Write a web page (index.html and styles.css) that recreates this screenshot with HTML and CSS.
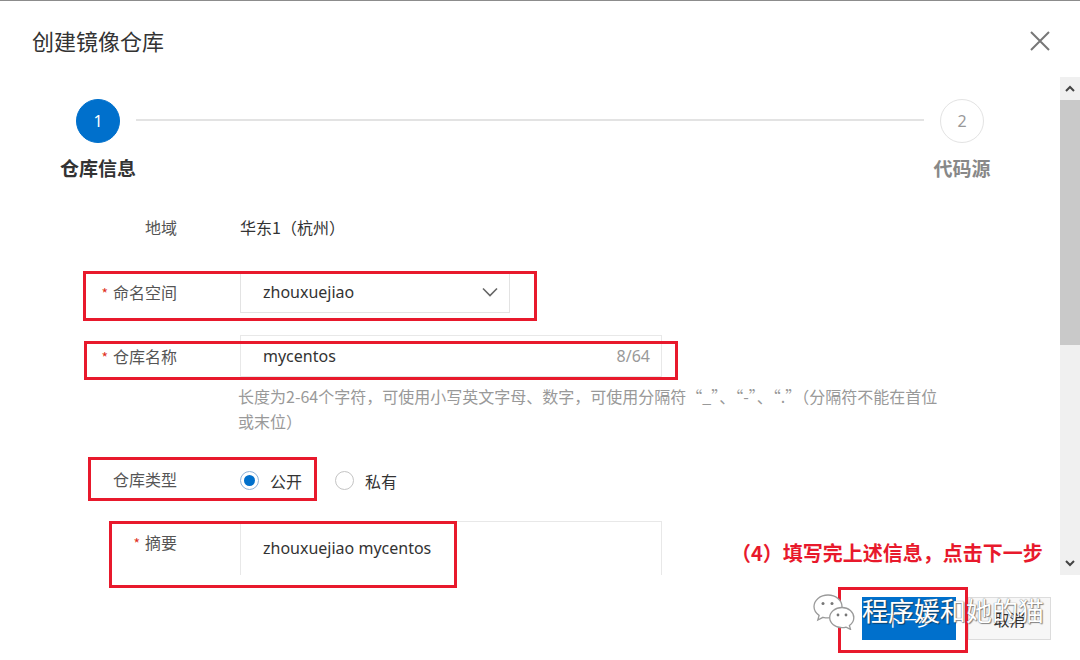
FILE: index.html
```html
<!DOCTYPE html>
<html lang="zh-CN">
<head>
<meta charset="utf-8">
<title>创建镜像仓库</title>
<link rel="stylesheet" href="styles.css">
</head>
<body>
<div class="page">
  <div class="dialog">
    <div class="header">
      <div class="title">创建镜像仓库</div>
      <svg class="close" width="20" height="20" viewBox="0 0 20 20"><path d="M1 1L19 19M19 1L1 19" stroke="#777" stroke-width="2" fill="none"/></svg>
    </div>
    <div class="main">
      <div class="content">
        <div class="steps">
          <div class="circle active">1</div>
          <div class="line"></div>
          <div class="circle">2</div>
          <div class="step-label active">仓库信息</div>
          <div></div>
          <div class="step-label">代码源</div>
        </div>
        <div class="form">
          <div class="row row-region">
            <div class="label">地域</div>
            <div class="value">华东1（杭州）</div>
          </div>
          <div class="row row-ns">
            <div class="label"><span class="req">*</span>命名空间</div>
            <div class="select">
              <span>zhouxuejiao</span>
              <svg width="16" height="10" viewBox="0 0 16 10"><path d="M1 1.5L8 8.5L15 1.5" stroke="#666" stroke-width="1.6" fill="none"/></svg>
            </div>
          </div>
          <div class="row row-name">
            <div class="label"><span class="req">*</span>仓库名称</div>
            <div class="input">
              <span>mycentos</span>
              <span class="count">8/64</span>
            </div>
          </div>
          <div class="help">长度为2-64个字符，可使用小写英文字母、数字，可使用分隔符“_”、“-”、“.”（分隔符不能在首位<br>或末位）</div>
          <div class="row row-type">
            <div class="label">仓库类型</div>
            <div class="radios">
              <span class="radio checked"></span><span class="radio-text">公开</span>
              <span class="radio"></span><span class="radio-text">私有</span>
            </div>
          </div>
          <div class="row row-summary">
            <div class="label"><span class="req">*</span>摘要</div>
            <div class="textarea">zhouxuejiao mycentos</div>
          </div>
        </div>
      </div>
      <div class="scrollbar">
        <div class="sb-btn"><svg width="10" height="7" viewBox="0 0 10 7"><path d="M1 6L5 2L9 6" stroke="#444" stroke-width="2" fill="none"/></svg></div>
        <div class="sb-thumb"></div>
        <div class="sb-track"></div>
        <div class="sb-btn"><svg width="10" height="7" viewBox="0 0 10 7"><path d="M1 1L5 5L9 1" stroke="#444" stroke-width="2" fill="none"/></svg></div>
      </div>
    </div>
    <div class="footer">
      <div class="btn primary">下一步</div>
      <div class="btn">取消</div>
    </div>
  </div>

  <div class="mark mark1"></div>
  <div class="mark mark2"></div>
  <div class="mark mark3"></div>
  <div class="mark mark4"></div>
  <div class="mark mark5"></div>
  <div class="note">（4）填写完上述信息，点击下一步</div>

  <div class="watermark">
    <svg class="wx" width="44" height="38" viewBox="0 0 44 38">
      <path d="M16 3C8 3 2 8.3 2 14.6c0 3.6 2 6.7 5.1 8.8L5.8 28l5.2-2.7c1.6.4 3.2.6 5 .6 7.9 0 14-5.2 14-11.4S23.9 3 16 3z" fill="#fff" stroke="#9a9a9a" stroke-width="1.3"/>
      <circle cx="11" cy="11.5" r="1.5" fill="#777"/>
      <circle cx="20" cy="11.5" r="1.5" fill="#777"/>
      <path d="M30 15.5c-6.9 0-12.3 4.5-12.3 10.1S23.1 35.7 30 35.7c1.4 0 2.8-.2 4.1-.6l4.4 2.3-1.1-3.9c2.7-1.9 4.4-4.6 4.4-7.8 0-5.6-5.1-10.2-11.8-10.2z" fill="#fff" stroke="#9a9a9a" stroke-width="1.3"/>
      <circle cx="26" cy="23" r="1.4" fill="#777"/>
      <circle cx="34" cy="23" r="1.4" fill="#777"/>
    </svg>
    <span class="wm-text">程序媛和她的猫</span>
  </div>
</div>
</body>
</html>
```

FILE: styles.css
```css
html, body {
  margin: 0;
  padding: 0;
  background: #fff;
}
body {
  font-family: "Noto Sans", "Noto Sans CJK SC", sans-serif;
  color: #333;
}
.page {
  position: relative;
  width: 1080px;
  height: 660px;
  overflow: hidden;
}
.dialog {
  box-sizing: border-box;
  height: 660px;
  border-top: 1px solid #8c8c8c;
  display: flex;
  flex-direction: column;
}
.header {
  height: 76px;
  box-sizing: border-box;
  padding: 24px 30px 0 32px;
  display: flex;
  align-items: flex-start;
  justify-content: space-between;
}
.title {
  font-family: "Noto Sans CJK SC", sans-serif;
  font-size: 22px;
  line-height: 30px;
  color: #333;
}
.close {
  margin-top: 6px;
}
.main {
  height: 498px;
  display: flex;
  overflow: hidden;
}
.content {
  flex: 1;
  overflow: hidden;
}
.steps {
  display: grid;
  grid-template-columns: 76px 1fr 76px;
  padding: 22px 60px 0;
}
.circle {
  justify-self: center;
  width: 44px;
  height: 44px;
  box-sizing: border-box;
  border-radius: 50%;
  border: 1px solid #e3e3e3;
  color: #999;
  font-size: 16px;
  display: flex;
  align-items: center;
  justify-content: center;
}
.circle.active {
  background: #0070cc;
  border-color: #0070cc;
  color: #fff;
}
.line {
  align-self: center;
  height: 2px;
  background: #e3e3e3;
  margin-top: -2px;
}
.step-label {
  justify-self: center;
  margin-top: 13px;
  font-family: "Noto Sans CJK SC", sans-serif;
  font-size: 19px;
  line-height: 24px;
  font-weight: 700;
  color: #888;
  white-space: nowrap;
}
.step-label.active {
  color: #333;
}
.form {
  font-size: 16px;
}
.row {
  display: flex;
  align-items: center;
}
.label {
  width: 177px;
  margin-right: 63px;
  text-align: right;
  line-height: 24px;
  color: #555;
  flex-shrink: 0;
  font-family: "Noto Sans CJK SC", sans-serif;
}
.req {
  color: #e0301e;
  font-size: 14px;
  margin-right: 5px;
}
.value {
  line-height: 24px;
  color: #333;
  font-family: "Noto Sans CJK SC", sans-serif;
}
.row-region {
  margin-top: 35px;
}
.row-ns {
  margin-top: 32px;
}
.select {
  width: 270px;
  height: 42px;
  box-sizing: border-box;
  border: 1px solid #e3e3e3;
  padding: 0 11px 0 22px;
  display: flex;
  align-items: center;
  justify-content: space-between;
  color: #333;
}
.row-name {
  margin-top: 22px;
}
.input {
  width: 422px;
  height: 42px;
  box-sizing: border-box;
  border: 1px solid #e8e8e8;
  padding: 0 11px 0 22px;
  display: flex;
  align-items: center;
  justify-content: space-between;
  color: #333;
}
.count {
  color: #999;
}
.help {
  margin: 7px 0 0 238px;
  line-height: 25px;
  color: #999;
  font-family: "Noto Sans CJK SC", sans-serif;
}
.row-type {
  margin-top: 30px;
  height: 30px;
}
.radios {
  display: flex;
  align-items: center;
  margin-top: 3px;
}
.radio {
  width: 19px;
  height: 19px;
  box-sizing: border-box;
  border-radius: 50%;
  border: 1px solid #c4c4c4;
  display: flex;
  align-items: center;
  justify-content: center;
}
.radio.checked {
  border-color: #8fb2d8;
}
.radio.checked::after {
  content: "";
  width: 11px;
  height: 11px;
  border-radius: 50%;
  background: #0070cc;
}
.radio-text {
  margin-left: 11px;
  margin-right: 33px;
  line-height: 24px;
  color: #333;
  font-family: "Noto Sans CJK SC", sans-serif;
}
.row-summary {
  margin-top: 27px;
  align-items: flex-start;
}
.row-summary .label {
  padding-top: 9px;
}
.textarea {
  width: 422px;
  height: 90px;
  box-sizing: border-box;
  border: 1px solid #e8e8e8;
  padding: 14px 22px 0;
  line-height: 24px;
  color: #333;
}
.scrollbar {
  width: 20px;
  display: flex;
  flex-direction: column;
  background: #f0f0f0;
}
.sb-btn {
  height: 23px;
  display: flex;
  align-items: center;
  justify-content: center;
}
.sb-thumb {
  height: 245px;
  background: #c9c9c9;
}
.sb-track {
  flex: 1;
}
.footer {
  flex: 1;
  display: flex;
  justify-content: flex-end;
  align-items: flex-start;
  gap: 12px;
  padding: 22px 29px 0 0;
}
.btn {
  height: 43px;
  box-sizing: border-box;
  width: 83px;
  border: 1px solid #dcdcdc;
  background: #f7f7f7;
  color: #333;
  font-size: 16px;
  display: flex;
  align-items: center;
  justify-content: center;
  font-family: "Noto Sans CJK SC", sans-serif;
}
.btn.primary {
  width: 94px;
  background: #0070cc;
  border-color: #0070cc;
  color: #fff;
}
.mark {
  position: absolute;
  box-sizing: border-box;
  border: 3px solid #e8192c;
}
.mark1 { left: 83px; top: 271px; width: 454px; height: 50px; }
.mark2 { left: 84px; top: 341px; width: 594px; height: 39px; }
.mark3 { left: 88px; top: 457px; width: 229px; height: 44px; }
.mark4 { left: 109px; top: 521px; width: 348px; height: 67px; }
.mark5 { left: 838px; top: 587px; width: 130px; height: 66px; }
.note {
  position: absolute;
  left: 731px;
  top: 540px;
  font-family: "Noto Sans CJK SC", sans-serif;
  font-size: 20px;
  line-height: 26px;
  font-weight: 700;
  color: #e8192c;
  white-space: nowrap;
}
.watermark {
  position: absolute;
  left: 812px;
  top: 592px;
  display: flex;
  align-items: flex-start;
  gap: 6px;
}
.wm-text {
  margin-top: 2px;
  font-family: "Noto Sans CJK SC", sans-serif;
  font-size: 26px;
  line-height: 32px;
  color: #fff;
  text-shadow: 0 0 1px #555, 1px 1px 1px rgba(0,0,0,0.45);
  white-space: nowrap;
}
```
